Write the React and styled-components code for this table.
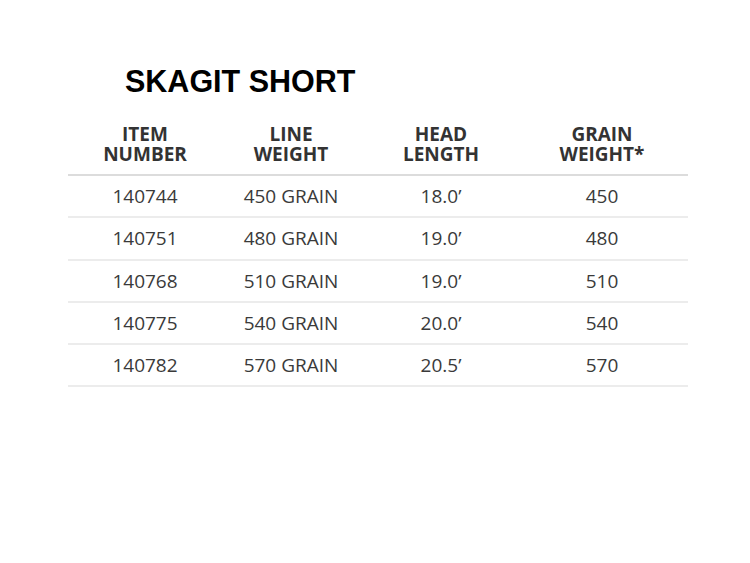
import React from 'react';
import styled, { createGlobalStyle } from 'styled-components';

const GlobalStyle = createGlobalStyle`
  body {
    margin: 0;
    background: #ffffff;
  }
`;

const Page = styled.div`
  width: 750px;
  height: 563px;
  padding: 66px 0 0 68px;
  box-sizing: border-box;
`;

const Title = styled.h1`
  margin: 0 0 0 57px;
  font-family: "Liberation Sans", Arial, sans-serif;
  font-weight: bold;
  font-size: 30.5px;
  line-height: 30px;
  color: #000;
`;

const Table = styled.div`
  width: 620px;
  margin-top: 28px;
  font-family: "Open Sans", sans-serif;
`;

const Row = styled.div`
  display: grid;
  grid-template-columns: 154px 138px 162px 160px 1fr;
  align-items: center;
  text-align: center;
  border-bottom: ${({ head }) => (head ? '2px solid #dcdcdc' : '2px solid #ececec')};
  ${({ head }) => (head ? 'padding-bottom: 10px;' : 'height: 40.3px;')}
`;

const HeadCell = styled.div`
  font-weight: 700;
  font-size: 19px;
  line-height: 20px;
  color: #333;
`;

const Cell = styled.div`
  font-size: 19px;
  line-height: 40px;
  color: #3a3a3a;
`;

const rows = [
  ['140744', '450 GRAIN', '18.0’', '450'],
  ['140751', '480 GRAIN', '19.0’', '480'],
  ['140768', '510 GRAIN', '19.0’', '510'],
  ['140775', '540 GRAIN', '20.0’', '540'],
  ['140782', '570 GRAIN', '20.5’', '570'],
];

const App = () => (
  <Page>
    <GlobalStyle />
    <Title>SKAGIT SHORT</Title>
    <Table>
      <Row head>
        <HeadCell>ITEM<br />NUMBER</HeadCell>
        <HeadCell>LINE<br />WEIGHT</HeadCell>
        <HeadCell>HEAD<br />LENGTH</HeadCell>
        <HeadCell>GRAIN<br />WEIGHT*</HeadCell>
      </Row>
      {rows.map((r) => (
        <Row key={r[0]}>
          {r.map((c) => (
            <Cell key={c}>{c}</Cell>
          ))}
        </Row>
      ))}
    </Table>
  </Page>
);

export default App;
